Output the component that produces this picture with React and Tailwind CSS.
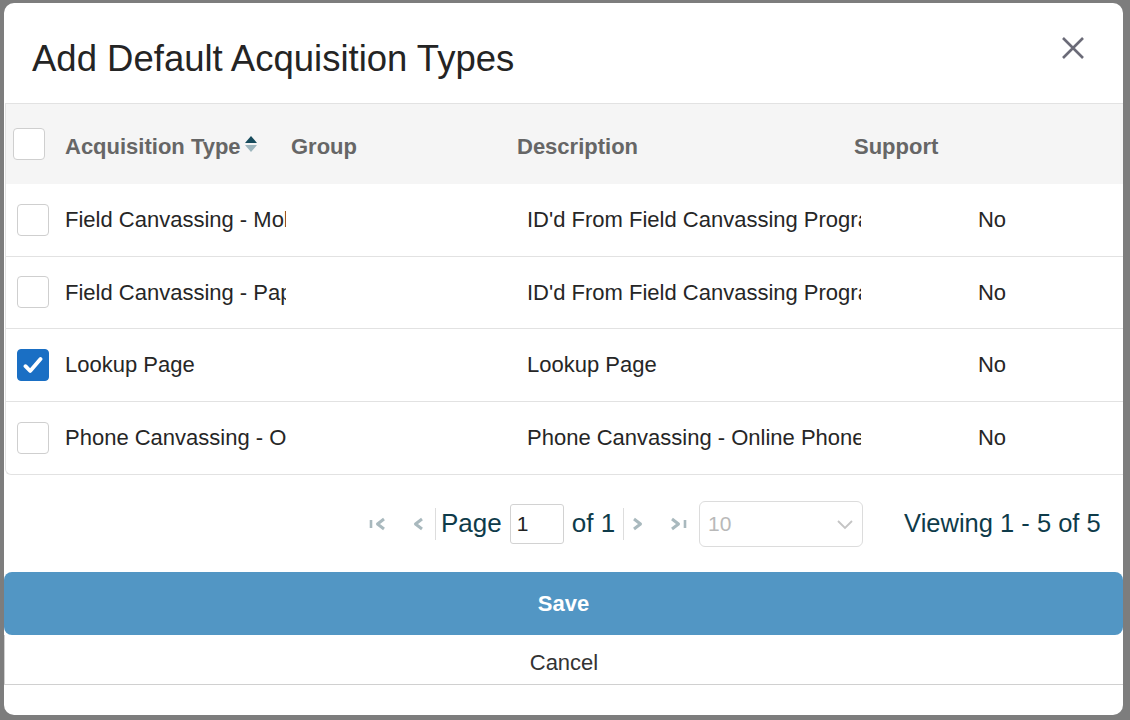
import React, { useState } from 'react';

const rows = [
  { id: 1, name: 'Field Canvassing - Mobile', desc: "ID'd From Field Canvassing Program - Mobile", support: 'No', checked: false },
  { id: 2, name: 'Field Canvassing - Paper', desc: "ID'd From Field Canvassing Program - Paper", support: 'No', checked: false },
  { id: 3, name: 'Lookup Page', desc: 'Lookup Page', support: 'No', checked: true },
  { id: 4, name: 'Phone Canvassing - Online', desc: 'Phone Canvassing - Online Phone Bank', support: 'No', checked: false },
];

const Box = ({ checked, onClick, size = 'w-[32px] h-[32px]' }) => (
  <button
    onClick={onClick}
    className={`${size} rounded-[4px] border flex items-center justify-center shrink-0 ${
      checked ? 'bg-[#1a6fc4] border-[#1a6fc4]' : 'bg-white border-[#cfcfcf]'
    }`}
  >
    {checked && (
      <svg width="20" height="18" viewBox="0 0 20 18">
        <path d="M2.5 10.2 L7.2 15 L17.5 3" fill="none" stroke="white" strokeWidth="3.8" strokeLinecap="round" strokeLinejoin="round" />
      </svg>
    )}
  </button>
);

const Chev = ({ dir = 'left', bar = false }) => (
  <svg width="20" height="18" viewBox="0 0 20 18" className="text-[#a9b9be]">
    {dir === 'left' ? (
      <>
        {bar && <path d="M3 5 V13" stroke="currentColor" strokeWidth="2.6" />}
        <path d="M16 4 L9.5 9 L16 14" fill="none" stroke="currentColor" strokeWidth="3" strokeLinejoin="round" />
      </>
    ) : (
      <>
        <path d="M4 4 L10.5 9 L4 14" fill="none" stroke="currentColor" strokeWidth="3" strokeLinejoin="round" />
        {bar && <path d="M17 5 V13" stroke="currentColor" strokeWidth="2.6" />}
      </>
    )}
  </svg>
);

export default function App() {
  const [checked, setChecked] = useState(rows.map(r => r.checked));
  const [all, setAll] = useState(false);

  return (
    <div className="h-[720px] w-[1130px] bg-[#7d7d7d] pl-[4px] pt-[3px] overflow-hidden" style={{ fontFamily: '"Liberation Sans", Arial, sans-serif' }}>
      <div className="w-[1119px] h-[712px] bg-white rounded-[10px] overflow-hidden flex flex-col">

        {/* Header */}
        <div className="h-[100px] flex justify-between shrink-0">
          <h1 className="pl-[28px] pt-[36px] text-[36.5px] leading-[40px] text-[#242424]">Add Default Acquisition Types</h1>
          <button className="mt-[30px] mr-[35px] w-[30px] h-[30px] flex items-center justify-center text-[#6b6b78]">
            <svg width="24" height="24" viewBox="0 0 24 24">
              <path d="M2 2 L22 22 M22 2 L2 22" stroke="currentColor" strokeWidth="2.6" />
            </svg>
          </button>
        </div>

        {/* Table */}
        <div className="ml-[1px] w-[1130px] border-t border-l border-b border-[#e2e2e2] rounded-bl-[6px] shrink-0">
          <div className="h-[80px] bg-[#f5f5f5] flex items-center text-[22px] font-bold text-[#666666] pt-[4px]">
            <div className="w-[59px] pl-[7px] flex items-center -mt-[4px]">
              <Box checked={all} onClick={() => setAll(!all)} size="w-[32px] h-[32px]" />
            </div>
            <div className="w-[226px] flex items-center gap-[3px]">
              <span>Acquisition Type</span>
              <svg width="14" height="20" viewBox="0 0 14 20" className="-mt-[4px]">
                <path d="M1 9 L7 2 L13 9 Z" fill="#174b5c" />
                <path d="M1 11 L7 18 L13 11 Z" fill="#9db6be" />
              </svg>
            </div>
            <div className="w-[226px]">Group</div>
            <div className="w-[337px]">Description</div>
            <div>Support</div>
          </div>

          {rows.map((r, i) => (
            <div key={r.id} className={`h-[72.5px] flex items-center text-[22px] text-[#262626] ${i < rows.length - 1 ? 'border-b border-[#e2e2e2]' : ''}`}>
              <div className="w-[59px] pl-[11px] flex items-center">
                <Box checked={checked[i]} onClick={() => setChecked(checked.map((c, j) => (j === i ? !c : c)))} />
              </div>
              <div className="w-[221px] overflow-hidden whitespace-nowrap">{r.name}</div>
              <div className="w-[241px]"></div>
              <div className="w-[334px] overflow-hidden whitespace-nowrap">{r.desc}</div>
              <div className="w-[262px] text-center">{r.support}</div>
            </div>
          ))}
        </div>

        {/* Pagination */}
        <div className="h-[97px] flex items-center shrink-0 text-[26px] text-[#0e3b4a]">
          <div className="ml-[364px] flex items-center">
            <Chev dir="left" bar />
            <div className="w-[18px]" />
            <Chev dir="left" />
            <div className="ml-[9px] w-px h-[32px] bg-[#dddddd]" />
            <span className="ml-[5px]">Page</span>
            <input
              defaultValue="1"
              className="ml-[8px] w-[54px] h-[40px] border border-[#d2d2d2] rounded-[3px] pl-[6px] text-[21px] text-[#222] outline-none"
            />
            <span className="ml-[8px]">of 1</span>
            <div className="ml-[8px] w-px h-[32px] bg-[#dddddd]" />
            <div className="ml-[6px]"><Chev dir="right" /></div>
            <div className="ml-[18px]"><Chev dir="right" bar /></div>
            <div className="ml-[11px] w-[164px] h-[46px] border border-[#dcdcdc] rounded-[6px] flex items-center justify-between pl-[8px] pr-[8px] text-[21px] text-[#b9b9b9]">
              <span>10</span>
              <svg width="18" height="12" viewBox="0 0 18 12">
                <path d="M2 3 L9 10 L16 3" fill="none" stroke="#c4c4c4" strokeWidth="1.8" />
              </svg>
            </div>
          </div>
          <div className="ml-[41px] text-[25.5px]">Viewing 1 - 5 of 5</div>
        </div>

        {/* Actions */}
        <button className="h-[63px] w-full bg-[#5296c4] rounded-[8px] text-white font-bold text-[22px] shrink-0">Save</button>
        <button className="h-[50px] w-full border-l border-b border-[#d0d0d0] text-[22px] text-[#333333] shrink-0 pt-[6px]">Cancel</button>
      </div>
    </div>
  );
}
